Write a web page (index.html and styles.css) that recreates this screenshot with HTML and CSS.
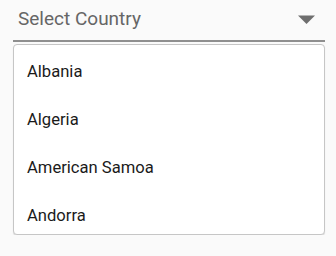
FILE: index.html
```html
<!DOCTYPE html>
<html lang="en">
<head>
    <meta charset="UTF-8">
    <title>Select Country</title>
    <link rel="stylesheet" href="styles.css">
</head>
<body>
<div class="select">
    <!-- 输入框 -->
    <div class="field">
        <span class="label">Select Country</span>
        <svg class="arrow" width="17" height="9" viewBox="0 0 17 9">
            <path d="M0 0.5 L17 0.5 L8.5 9 Z" fill="#6e6e6e"/>
        </svg>
    </div>
    <!-- 下拉列表 -->
    <ul class="menu">
        <li>Albania</li>
        <li>Algeria</li>
        <li>American Samoa</li>
        <li>Andorra</li>
    </ul>
</div>
</body>
</html>
```

FILE: styles.css
```css
body {
    margin: 0;
    padding: 0;
    background-color: #FAFAFA;
    font-family: Roboto, "Liberation Sans", sans-serif;
}
.select {
    width: 312px;
    margin-left: 13px;
}
.field {
    display: flex;
    align-items: center;
    justify-content: space-between;
    height: 42px;
    padding: 8px 10px 10px 5px;
    box-sizing: border-box;
    border-bottom: 2px solid #8F8F8F;
}
.label {
    font-size: 19px;
    line-height: 24px;
    color: #666;
}
.arrow {
    display: block;
}
.menu {
    list-style: none;
    margin: 2px 0 0 0;
    padding: 3px 0 0 0;
    height: 191px;
    box-sizing: border-box;
    overflow: hidden;
    background-color: #FFF;
    border: 1px solid #C6C6C6;
    border-radius: 4px;
    box-shadow: 0 1px 1px rgba(0, 0, 0, 0.12);
}
.menu li {
    height: 48px;
    line-height: 48px;
    padding-left: 13px;
    font-size: 16.6px;
    color: #1A1A1A;
}
```
